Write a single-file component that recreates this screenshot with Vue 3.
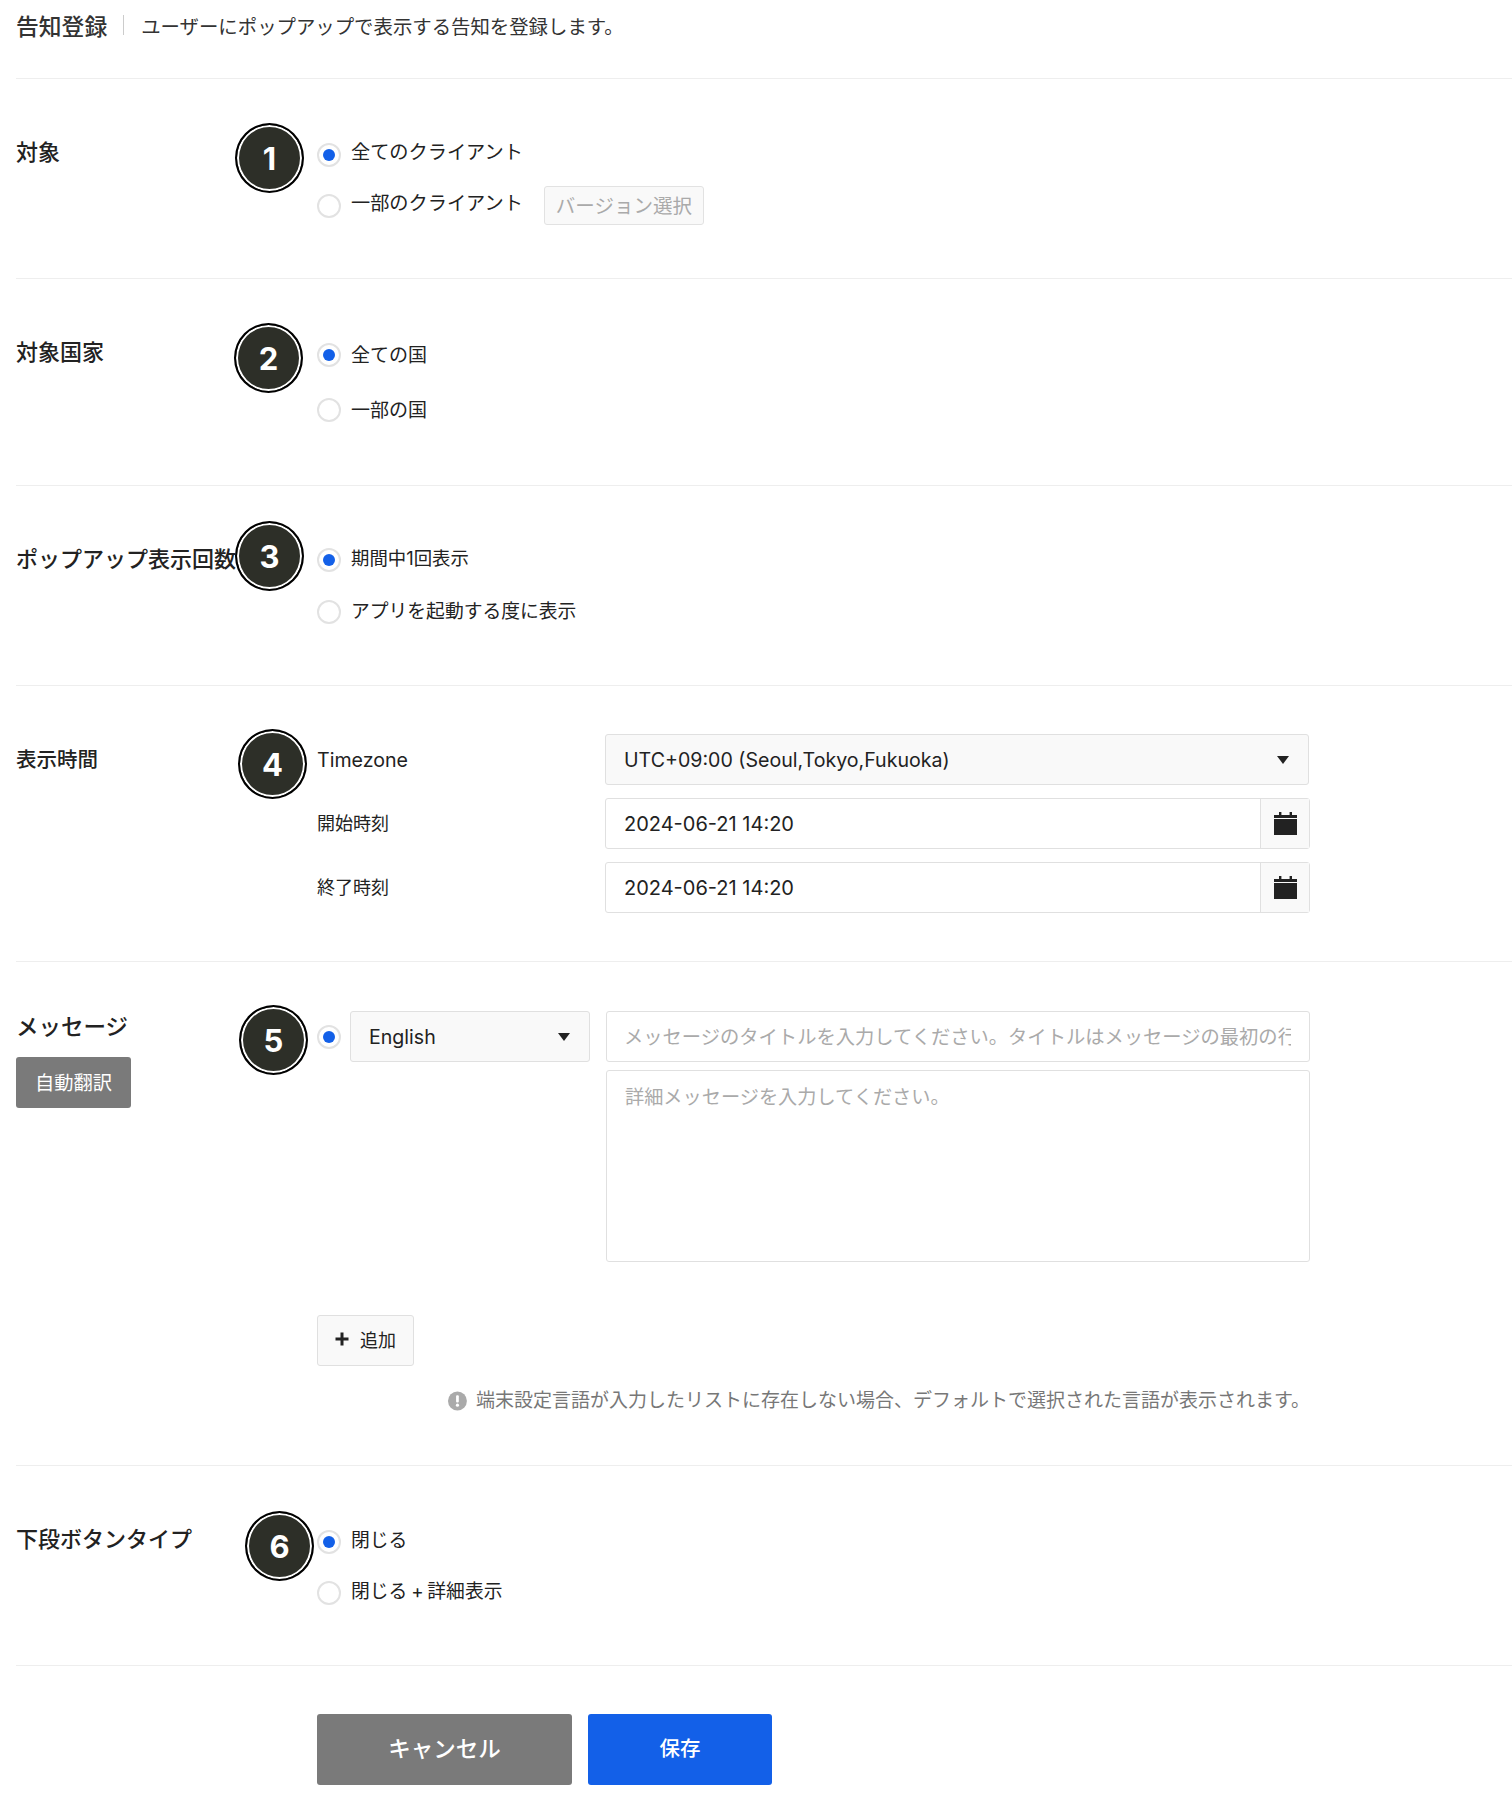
<template>
  <div class="page">
    <header class="page-head">
      <h1 class="page-title">告知登録</h1>
      <span class="head-sep"></span>
      <p class="page-desc">ユーザーにポップアップで表示する告知を登録します。</p>
    </header>

    <section class="row row-target">
      <div class="row-label">対象</div>
      <div class="radio-list">
        <label class="radio-row">
          <span class="radio checked"></span>全てのクライアント
        </label>
        <label class="radio-row">
          <span class="radio"></span>一部のクライアント
          <button class="version-btn" type="button">バージョン選択</button>
        </label>
      </div>
    </section>

    <section class="row row-country">
      <div class="row-label">対象国家</div>
      <div class="radio-list wide">
        <label class="radio-row"><span class="radio checked"></span>全ての国</label>
        <label class="radio-row"><span class="radio"></span>一部の国</label>
      </div>
    </section>

    <section class="row row-count">
      <div class="row-label">ポップアップ表示回数</div>
      <div class="radio-list tight">
        <label class="radio-row compact"><span class="radio checked"></span>期間中1回表示</label>
        <label class="radio-row"><span class="radio"></span>アプリを起動する度に表示</label>
      </div>
    </section>

    <section class="row row-time">
      <div class="row-label">表示時間</div>
      <div class="time-grid">
        <div class="time-name en">Timezone</div>
        <div class="select time-select">
          <span>UTC+09:00 (Seoul,Tokyo,Fukuoka)</span>
          <i class="caret"></i>
        </div>
        <template v-for="d in dates" :key="d.label">
          <div class="time-name">{{ d.label }}</div>
          <div class="date-field">
            <span class="date-value">{{ d.value }}</span>
            <span class="date-addon">
              <svg width="23" height="23" viewBox="0 0 23 23">
                <path d="M5 0h2.400v3H15.600V0H18v3h5v3H0V3h5z" fill="#222" />
                <rect y="7" width="23" height="16" fill="#222" />
              </svg>
            </span>
          </div>
        </template>
      </div>
    </section>

    <section class="row row-message">
      <div class="row-side">
        <div class="row-label no-top">メッセージ</div>
        <button class="auto-btn" type="button">自動翻訳</button>
      </div>
      <div class="message-main">
        <div class="message-line">
          <span class="radio checked"></span>
          <div class="select lang-select">
            <span>English</span>
            <i class="caret"></i>
          </div>
          <div class="message-fields">
            <input class="text-input" type="text" placeholder="メッセージのタイトルを入力してください。タイトルはメッセージの最初の行に表示されます。">
            <textarea class="text-area" placeholder="詳細メッセージを入力してください。"></textarea>
          </div>
        </div>
        <button class="add-btn" type="button">
          <svg width="14" height="14" viewBox="0 0 14 14">
            <path d="M7 0.500v13M0.500 7h13" stroke="#222" stroke-width="3" fill="none" />
          </svg>
          追加
        </button>
        <p class="note">
          <svg width="20" height="20" viewBox="0 0 18 18">
            <circle cx="9" cy="9" r="9" fill="#aaa" />
            <rect x="7.700" y="3.500" width="2.600" height="7" rx="1" fill="#fff" />
            <circle cx="9" cy="13" r="1.500" fill="#fff" />
          </svg>
          端末設定言語が入力したリストに存在しない場合、デフォルトで選択された言語が表示されます。
        </p>
      </div>
    </section>

    <section class="row row-button">
      <div class="row-label">下段ボタンタイプ</div>
      <div class="radio-list">
        <label class="radio-row"><span class="radio checked"></span>閉じる</label>
        <label class="radio-row"><span class="radio"></span>閉じる + 詳細表示</label>
      </div>
    </section>

    <footer class="actions">
      <button class="btn-cancel" type="button">キャンセル</button>
      <button class="btn-save" type="button">保存</button>
    </footer>

    <div
      v-for="b in badges"
      :key="b.n"
      class="badge"
      :style="{ left: b.x + 'px', top: b.y + 'px' }"
    >
      <span>{{ b.n }}</span>
    </div>
  </div>
</template>

<script setup>
const dates = [
  { label: '開始時刻', value: '2024-06-21 14:20' },
  { label: '終了時刻', value: '2024-06-21 14:20' }
]

const badges = [
  { n: 1, x: 235, y: 123 },
  { n: 2, x: 234, y: 323 },
  { n: 3, x: 235, y: 521 },
  { n: 4, x: 238, y: 729 },
  { n: 5, x: 239, y: 1005 },
  { n: 6, x: 245, y: 1511 }
]
</script>

<style>
body {
  margin: 0;
  background: #fff;
}
</style>

<style scoped>
.page {
  position: relative;
  height: 1814px;
  padding-left: 16px;
  box-sizing: border-box;
  overflow: hidden;
  font-family: Inter, "Noto Sans CJK JP", sans-serif;
  color: #222;
}

.page-head {
  display: flex;
  align-items: center;
  height: 78px;
  padding-bottom: 28px;
  box-sizing: border-box;
}

.page-title {
  margin: 0;
  font-size: 22.800px;
  font-weight: 500;
  color: #333;
}

.head-sep {
  width: 1px;
  height: 20px;
  margin: 0 17px 0 16px;
  background: #ccc;
}

.page-desc {
  margin: 0;
  font-size: 19.400px;
  color: #333;
}

.row {
  display: flex;
  box-sizing: border-box;
  padding-top: 49px;
  border-top: 1px solid #eee;
}

.row-target { height: 200px; }
.row-country { height: 207px; }
.row-count { height: 200px; }
.row-time { height: 276px; padding-top: 48px; }
.row-message { height: 504px; }
.row-button { height: 200px; word-spacing: -1.500px; }

.row-label {
  width: 301px;
  flex-shrink: 0;
  margin-top: 8px;
  font-size: 22px;
  line-height: 32px;
  font-weight: 500;
  white-space: nowrap;
}

.row-time .row-label {
  margin-top: 10px;
  font-size: 20.500px;
}

.row-label.no-top {
  margin-top: 0;
  font-size: 22.500px;
}

.radio-list {
  display: flex;
  flex-direction: column;
  gap: 12px;
  margin-top: 7px;
}

.radio-list.wide { gap: 16px; }
.radio-list.tight { gap: 13px; margin-top: 5px; }

.radio-row {
  display: flex;
  align-items: center;
  height: 39px;
  padding-bottom: 5px;
  box-sizing: border-box;
  font-size: 18.800px;
  white-space: nowrap;
}

.radio-row.compact {
  font-size: 18.400px;
}

.radio-row .radio {
  margin-top: 5px;
}

.row-target .radio-row,
.row-button .radio-row {
  padding-bottom: 7px;
}

.row-target .radio-row {
  font-size: 19.200px;
}

.row-target .radio-row .radio,
.row-button .radio-row .radio {
  margin-top: 7px;
}

.row-country .radio-row {
  padding-bottom: 3px;
  font-size: 19px;
}

.row-country .radio-row .radio {
  margin-top: 3px;
}

.radio {
  display: flex;
  align-items: center;
  justify-content: center;
  width: 24px;
  height: 24px;
  margin-right: 10px;
  flex-shrink: 0;
  box-sizing: border-box;
  border: 2px solid #e2e2e2;
  border-radius: 50%;
  background: #fff;
}

.radio.checked::after {
  content: "";
  width: 12px;
  height: 12px;
  border-radius: 50%;
  background: #1360e8;
}

.version-btn {
  height: 39px;
  width: 160px;
  margin-top: 7px;
  margin-left: 21px;
  padding: 0 0 3px;
  border: 1px solid #e2e2e2;
  border-radius: 3px;
  background: #f9f9f9;
  font: inherit;
  font-size: 19.500px;
  color: #aaa;
}

.time-grid {
  display: grid;
  grid-template-columns: 288px 705px;
  grid-auto-rows: 51px;
  row-gap: 13px;
  align-items: center;
}

.time-name {
  padding-bottom: 3px;
  font-size: 18px;
}

.time-name.en {
  padding-bottom: 0;
  font-size: 19.600px;
}

.select {
  display: flex;
  align-items: center;
  justify-content: space-between;
  height: 51px;
  padding: 0 19px 0 18px;
  box-sizing: border-box;
  border: 1px solid #e0e0e0;
  border-radius: 3px;
  background: #f9f9f9;
  font-size: 19.600px;
}

.time-select {
  margin-right: 1px;
}

.caret {
  width: 0;
  height: 0;
  border-left: 6.500px solid transparent;
  border-right: 6.500px solid transparent;
  border-top: 8px solid #222;
}

.date-field {
  display: flex;
  align-items: stretch;
  height: 51px;
  box-sizing: border-box;
  border: 1px solid #e0e0e0;
  border-radius: 3px;
  background: #fff;
  font-size: 20px;
}

.date-value {
  flex: 1;
  align-self: center;
  padding-left: 18px;
}

.date-addon {
  display: flex;
  align-items: center;
  justify-content: center;
  width: 48px;
  border-left: 1px solid #e0e0e0;
  background: #f9f9f9;
}

.row-side {
  width: 301px;
  flex-shrink: 0;
}

.auto-btn {
  display: block;
  width: 115px;
  height: 51px;
  margin-top: 14px;
  padding: 0 0 1px;
  border: none;
  border-radius: 3px;
  background: #7a7a7a;
  font: inherit;
  font-size: 19.300px;
  color: #fff;
}

.message-main {
  width: 993px;
}

.message-line {
  display: flex;
  align-items: flex-start;
}

.message-line > .radio {
  margin-top: 14px;
  margin-right: 9px;
}

.lang-select {
  width: 240px;
  margin-right: 16px;
}

.message-fields {
  display: flex;
  flex-direction: column;
  gap: 8px;
  flex: 1;
}

.text-input,
.text-area {
  display: block;
  width: 100%;
  box-sizing: border-box;
  border: 1px solid #e0e0e0;
  border-radius: 3px;
  background: #fff;
  font: inherit;
  outline: none;
}

.text-input {
  height: 51px;
  padding: 0 18px 0 17px;
  font-size: 19.300px;
}

.text-area {
  height: 192px;
  padding: 11px 18px;
  font-size: 19.200px;
  resize: none;
}

.text-input::placeholder,
.text-area::placeholder {
  color: #aaa;
  opacity: 1;
}

.add-btn {
  display: flex;
  align-items: center;
  justify-content: center;
  gap: 11px;
  width: 97px;
  height: 51px;
  margin-top: 53px;
  padding: 0 0 3px;
  border: 1px solid #e0e0e0;
  border-radius: 3px;
  background: #f9f9f9;
  font: inherit;
  font-size: 18px;
  color: #222;
}

.note {
  display: flex;
  align-items: center;
  gap: 9px;
  margin: 21px 0 0 131px;
  font-size: 19px;
  line-height: 28px;
  color: #777;
  white-space: nowrap;
}

.actions {
  display: flex;
  gap: 16px;
  padding: 48px 0 0 301px;
  border-top: 1px solid #eee;
}

.actions button {
  height: 71px;
  padding: 0 0 5px;
  border: none;
  border-radius: 3px;
  font: inherit;
  font-weight: 500;
  color: #fff;
}

.actions .btn-cancel {
  width: 255px;
  font-size: 22.500px;
  background: #7a7a7a;
}

.actions .btn-save {
  width: 184px;
  font-size: 20.500px;
  background: #1360e8;
}

.badge {
  position: absolute;
  display: flex;
  align-items: center;
  justify-content: center;
  width: 69px;
  height: 70px;
  box-sizing: border-box;
  border: 2px solid #000;
  border-radius: 50%;
  background: #2d2f28;
  box-shadow: inset 0 0 0 2px #fff;
  font-size: 31px;
  font-weight: 700;
  color: #fff;
}
</style>
